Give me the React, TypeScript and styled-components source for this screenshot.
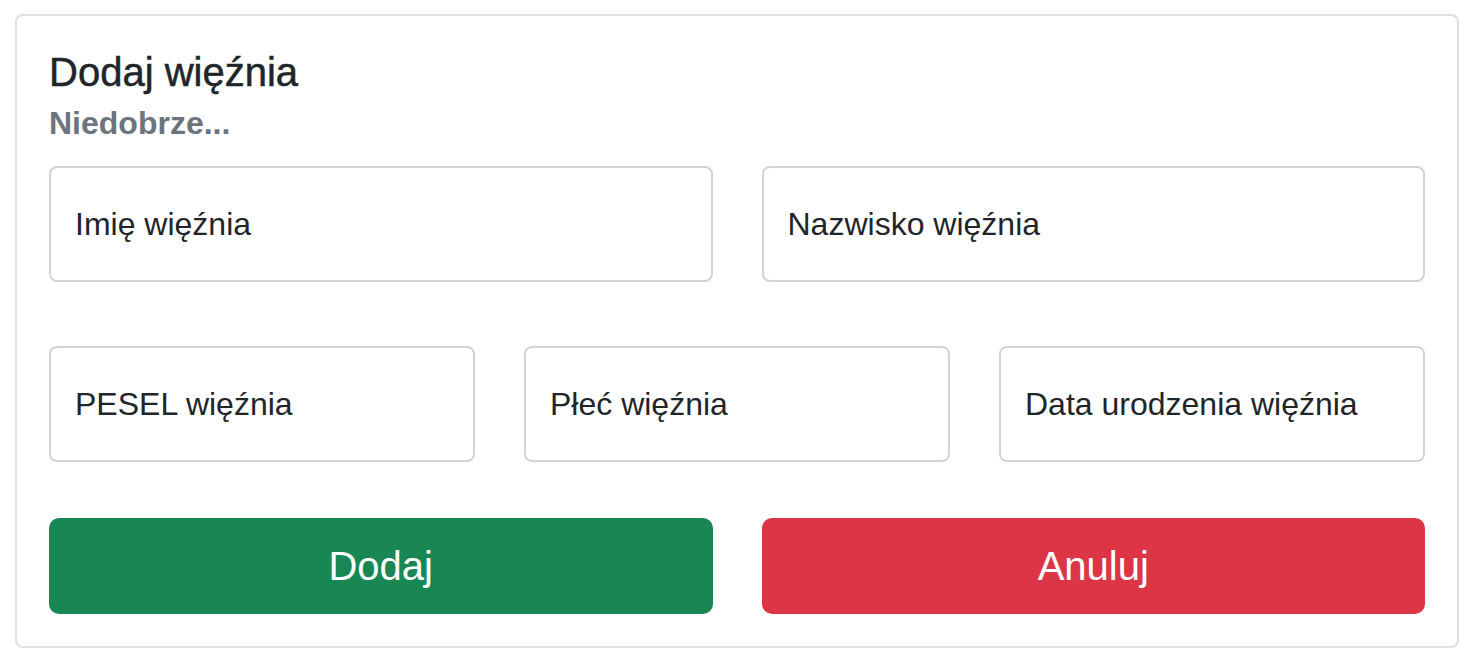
import React from "react";
import styled, { createGlobalStyle } from "styled-components";

const Global = createGlobalStyle`
  html, body { margin: 0; padding: 0; background: #fff; }
  body { font-family: "Liberation Sans", Arial, sans-serif; color: #212529; }
  * { box-sizing: border-box; }
`;

const Page = styled.div`
  padding: 14px 19px 0 15px;
`;

const Card = styled.div`
  border: 2px solid rgba(0, 0, 0, 0.125);
  border-radius: 8px;
  background: #fff;
  padding: 32px;
  display: flex;
  flex-direction: column;
`;

const Title = styled.h5`
  margin: 0 0 16px;
  font-size: 40px;
  line-height: 48px;
  font-weight: 500;
  color: #212529;
  -webkit-text-stroke: 0.5px #212529;
`;

const Subtitle = styled.h6`
  margin: -8px 0 0;
  font-size: 32px;
  line-height: 38px;
  font-weight: 700;
  color: #6c757d;
`;

const Row = styled.div<{ $cols: number; $top: number }>`
  display: grid;
  grid-template-columns: repeat(${(p) => p.$cols}, 1fr);
  column-gap: 49px;
  margin-top: ${(p) => p.$top}px;
`;

const Input = styled.input`
  height: 116px;
  width: 100%;
  border: 2px solid #ced4da;
  border-radius: 8px;
  padding: 0 24px;
  font-family: inherit;
  font-size: 32px;
  color: #212529;
  background: #fff;
  outline: none;
  &::placeholder { color: #212529; opacity: 1; }
`;

const Button = styled.button<{ $variant: "success" | "danger" }>`
  height: 96px;
  border: 2px solid ${(p) => (p.$variant === "success" ? "#198754" : "#dc3545")};
  background: ${(p) => (p.$variant === "success" ? "#198754" : "#dc3545")};
  color: #fff;
  border-radius: 10px;
  font-family: inherit;
  font-size: 40px;
  line-height: 60px;
  cursor: pointer;
`;

export default function App() {
  return (
    <>
      <Global />
      <Page>
        <Card>
          <Title>Dodaj więźnia</Title>
          <Subtitle>Niedobrze...</Subtitle>
          <Row $cols={2} $top={24}>
            <Input placeholder="Imię więźnia" />
            <Input placeholder="Nazwisko więźnia" />
          </Row>
          <Row $cols={3} $top={64}>
            <Input placeholder="PESEL więźnia" />
            <Input placeholder="Płeć więźnia" />
            <Input placeholder="Data urodzenia więźnia" />
          </Row>
          <Row $cols={2} $top={56}>
            <Button $variant="success">Dodaj</Button>
            <Button $variant="danger">Anuluj</Button>
          </Row>
        </Card>
      </Page>
    </>
  );
}
